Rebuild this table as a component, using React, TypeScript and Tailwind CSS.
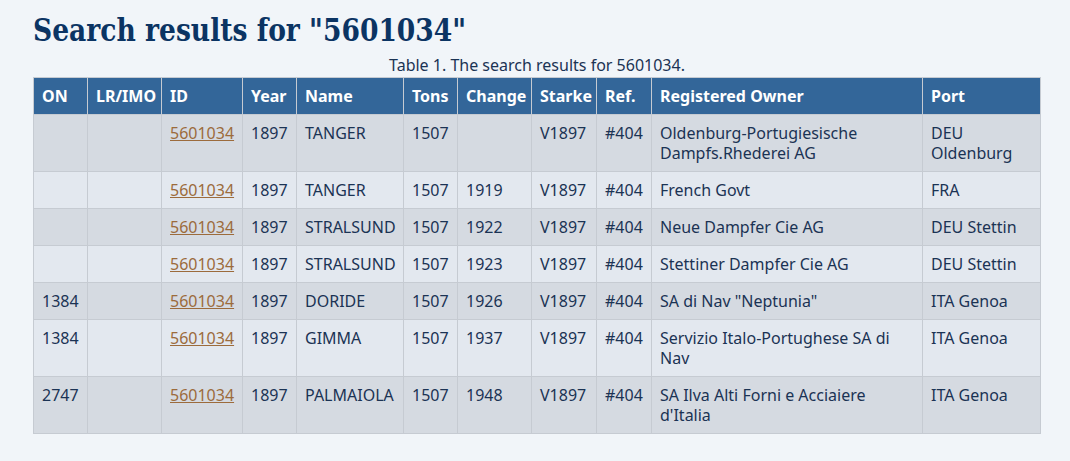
import React from 'react';

type Row = {
  on: string;
  lr: string;
  id: string;
  year: string;
  name: string;
  tons: string;
  change: string;
  starke: string;
  ref: string;
  owner: string;
  port: string;
};

const rows: Row[] = [
  { on: '', lr: '', id: '5601034', year: '1897', name: 'TANGER', tons: '1507', change: '', starke: 'V1897', ref: '#404', owner: 'Oldenburg-Portugiesische Dampfs.Rhederei AG', port: 'DEU Oldenburg' },
  { on: '', lr: '', id: '5601034', year: '1897', name: 'TANGER', tons: '1507', change: '1919', starke: 'V1897', ref: '#404', owner: 'French Govt', port: 'FRA' },
  { on: '', lr: '', id: '5601034', year: '1897', name: 'STRALSUND', tons: '1507', change: '1922', starke: 'V1897', ref: '#404', owner: 'Neue Dampfer Cie AG', port: 'DEU Stettin' },
  { on: '', lr: '', id: '5601034', year: '1897', name: 'STRALSUND', tons: '1507', change: '1923', starke: 'V1897', ref: '#404', owner: 'Stettiner Dampfer Cie AG', port: 'DEU Stettin' },
  { on: '1384', lr: '', id: '5601034', year: '1897', name: 'DORIDE', tons: '1507', change: '1926', starke: 'V1897', ref: '#404', owner: 'SA di Nav "Neptunia"', port: 'ITA Genoa' },
  { on: '1384', lr: '', id: '5601034', year: '1897', name: 'GIMMA', tons: '1507', change: '1937', starke: 'V1897', ref: '#404', owner: 'Servizio Italo-Portughese SA di Nav', port: 'ITA Genoa' },
  { on: '2747', lr: '', id: '5601034', year: '1897', name: 'PALMAIOLA', tons: '1507', change: '1948', starke: 'V1897', ref: '#404', owner: "SA Ilva Alti Forni e Acciaiere d'Italia", port: 'ITA Genoa' },
];

const columns: { label: string; width: string }[] = [
  { label: 'ON', width: 'w-[54px]' },
  { label: 'LR/IMO', width: 'w-[74px]' },
  { label: 'ID', width: 'w-[81px]' },
  { label: 'Year', width: 'w-[54px]' },
  { label: 'Name', width: 'w-[107px]' },
  { label: 'Tons', width: 'w-[54px]' },
  { label: 'Change', width: 'w-[74px]' },
  { label: 'Starke', width: 'w-[65px]' },
  { label: 'Ref.', width: 'w-[55px]' },
  { label: 'Registered Owner', width: 'w-[271px]' },
  { label: 'Port', width: 'w-[118px]' },
];

const td = 'border border-[#c6cbd2] px-2 py-2 align-top';

export default function App() {
  return (
    <div className="min-h-[461px] w-[1070px] bg-[#f1f5f9] pl-[33px] pt-[8px] font-['Noto_Sans',sans-serif] text-[#1b3354]">
      <h1 className="origin-left [transform:scaleX(0.83)] whitespace-nowrap font-['DejaVu_Serif',serif] text-[32px] font-bold leading-[44px] text-[#0b3463]">
        Search results for "5601034"
      </h1>
      <table className="w-[1007px] table-fixed border-collapse text-[16px] leading-[20px]">
        <caption className="pt-[2px] pb-[1px] text-center text-[16px] leading-[22px] text-[#1b3354]">
          Table 1. The search results for 5601034.
        </caption>
        <colgroup>
          {columns.map((c) => (
            <col key={c.label} className={c.width} />
          ))}
        </colgroup>
        <thead>
          <tr className="bg-[#336699] text-white">
            {columns.map((c) => (
              <th key={c.label} className="border border-[#c6cbd2] px-2 py-2 text-left font-bold whitespace-nowrap">
                {c.label}
              </th>
            ))}
          </tr>
        </thead>
        <tbody>
          {rows.map((r, i) => (
            <tr key={i} className={i % 2 === 0 ? 'bg-[#d5dae1]' : 'bg-[#e3e8ef]'}>
              <td className={td}>{r.on}</td>
              <td className={td}>{r.lr}</td>
              <td className={td}>
                <a href="#" className="text-[#9c6b3c] underline">{r.id}</a>
              </td>
              <td className={td}>{r.year}</td>
              <td className={td}>{r.name}</td>
              <td className={td}>{r.tons}</td>
              <td className={td}>{r.change}</td>
              <td className={td}>{r.starke}</td>
              <td className={td}>{r.ref}</td>
              <td className={td}>{r.owner}</td>
              <td className={td}>{r.port}</td>
            </tr>
          ))}
        </tbody>
      </table>
    </div>
  );
}
